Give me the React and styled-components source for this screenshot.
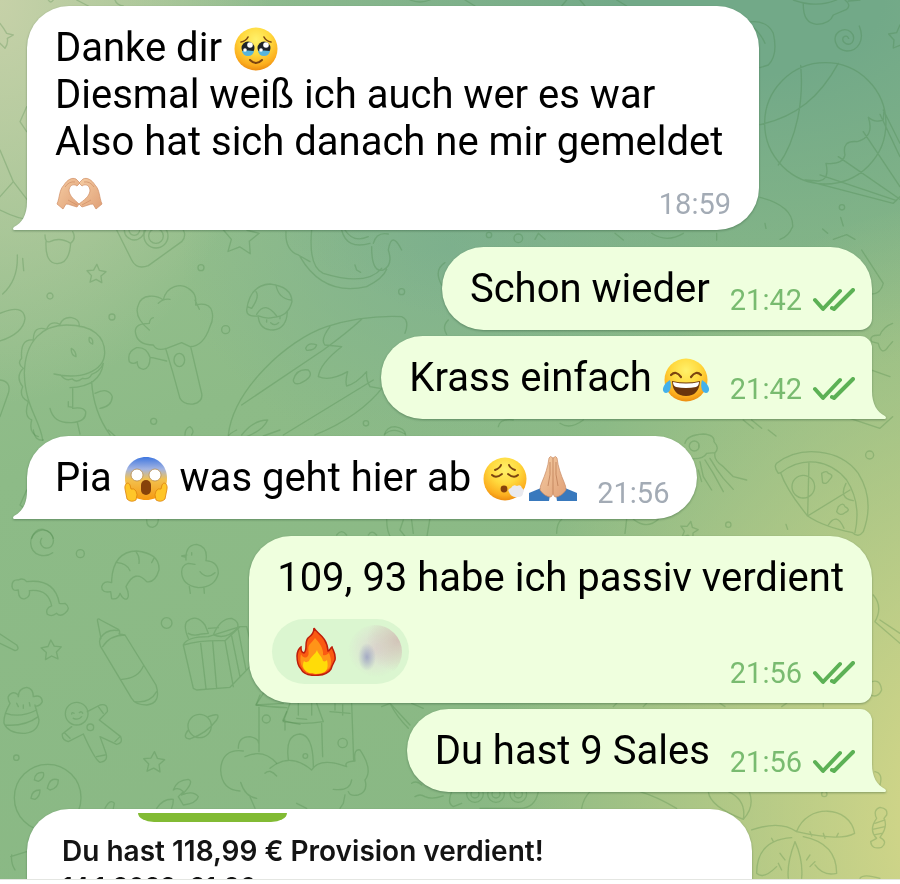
import styled, { createGlobalStyle, css } from "styled-components";

const GlobalStyle = createGlobalStyle`
  * {
    box-sizing: border-box;
  }

  body {
    margin: 0;
    font-family: Roboto, "Liberation Sans", sans-serif;
  }
`;

const messages = [
  {
    side: "in",
    tail: true,
    time: "18:59",
    parts: ["Danke dir ", { emoji: "tears" }, "\nDiesmal weiß ich auch wer es war\nAlso hat sich danach ne mir gemeldet ", { emoji: "heartHands" }],
  },
  { side: "out", group: "first", time: "21:42", parts: ["Schon wieder"] },
  { side: "out", group: "last", tail: true, time: "21:42", parts: ["Krass einfach ", { emoji: "joy" }] },
  {
    side: "in",
    tail: true,
    time: "21:56",
    parts: ["Pia ", { emoji: "scream" }, " was geht hier ab ", { emoji: "exhale" }, { emoji: "pray" }],
  },
  { side: "out", group: "first", time: "21:56", parts: ["109, 93 habe ich passiv verdient"], reaction: true },
  { side: "out", group: "last", tail: true, time: "21:56", parts: ["Du hast 9 Sales"] },
];

export default function App() {
  return (
    <Page>
      <GlobalStyle />
      <Chat>
        <Wallpaper />
        <Messages>
          {messages.map((m, i) => (
            <Message key={i} message={m} />
          ))}
          <PhotoBubble>
            <GreenButton />
            <Headline>Du hast 118,99 € Provision verdient!</Headline>
            <DateLine>14.1.2022, 21:36</DateLine>
          </PhotoBubble>
        </Messages>
      </Chat>
      <InputBar />
    </Page>
  );
}

function Message({ message }) {
  const { side, group, tail, time, parts, reaction } = message;
  const meta = (
    <Meta $side={side} $float={!reaction}>
      <time>{time}</time>
      {side === "out" && <Checks />}
    </Meta>
  );

  return (
    <Bubble $side={side} $group={group}>
      <Text $inset={reaction}>
        {parts.map((p, i) => (p.emoji ? <Emoji key={i} name={p.emoji} /> : p))}
        {!reaction && meta}
      </Text>
      {reaction && (
        <Footer>
          <Reaction type="button" aria-label="Reaktion Feuer">
            <Fire />
            <Avatar />
          </Reaction>
          {meta}
        </Footer>
      )}
      {tail && <Tail side={side} />}
    </Bubble>
  );
}

function Tail({ side }) {
  return (
    <TailSvg $side={side} viewBox="0 0 15 28" aria-hidden="true">
      <path d="M15 0H14C14 13 9 21 1 25Q-1 27 1 28H15Z" />
    </TailSvg>
  );
}

function Checks() {
  return (
    <ChecksSvg viewBox="0 0 43 24" aria-label="Gelesen">
      <path d="M3 12L11 21L28 3M20 20L22 21L41 2" />
    </ChecksSvg>
  );
}

function Fire() {
  return (
    <FireSvg viewBox="0 0 40 49" aria-hidden="true">
      <path
        d="M18 1C20 6 31 9 32 24C34 24 34 21 36 20C37 24 40 26 39 33C37 37 36 38 35 42C30 50 9 51 5 42C2 39 1 34 1 29C1 25 3 21 5 20C5 23 5 25 8 26C12 22 8 16 12 11C15 9 18 6 18 1Z"
        fill="#fa5a12"
        stroke="#bd1d0b"
        strokeWidth="1.5"
      />
      <path
        d="M19 11C23 15 28 22 27 28C30 29 31 27 33 26C35 31 36 36 34 40C30 47 10 48 7 41C4 37 4 32 5 27C7 31 9 31 11 30C15 27 10 21 14 17Q17 14 19 11Z"
        fill="#ff9418"
      />
      <path
        d="M21 23C22 27 26 29 27 34C29 35 30 34 31 33C32 37 32 41 30 44C26 48 12 48 9 43C6 40 7 36 8 34C10 36 11 35 13 34C15 29 19 28 21 23Z"
        fill="#ffdc08"
      />
    </FireSvg>
  );
}

function Emoji({ name }) {
  const { label, art: Art } = emojis[name];
  return (
    <EmojiSvg viewBox="0 0 48 48" role="img" aria-label={label}>
      <defs>
        <radialGradient id="face" cx="50%" cy="28%" r="75%">
          <stop offset="0" stopColor="#fff16b" />
          <stop offset="0.45" stopColor="#ffd93d" />
          <stop offset="0.8" stopColor="#fcae1f" />
          <stop offset="1" stopColor="#e8840c" />
        </radialGradient>
        <linearGradient id="scared" x1="0" y1="0" x2="0" y2="1">
          <stop offset="0" stopColor="#3f77e0" />
          <stop offset="0.28" stopColor="#a3b4e2" />
          <stop offset="0.52" stopColor="#f2c14f" />
          <stop offset="1" stopColor="#f7990f" />
        </linearGradient>
        <linearGradient id="skin" x1="0" y1="0" x2="1" y2="1">
          <stop offset="0" stopColor="#f5cda3" />
          <stop offset="1" stopColor="#e0a077" />
        </linearGradient>
      </defs>
      <Art />
    </EmojiSvg>
  );
}

const Tears = () => (
  <>
    <circle cx="24" cy="24" r="21.5" fill="url(#face)" />
    <path d="M9 17Q14 16 16 12M39 17Q34 16 32 12" fill="none" stroke="#7b4410" strokeWidth="1.6" strokeLinecap="round" />
    {[16, 32].map(x => (
      <g key={x}>
        <circle cx={x} cy="23" r="6.5" fill="#20242a" />
        <path d={`M${x - 6} 26Q${x} 25 ${x + 6} 26Q${x + 5} 31 ${x} 31Q${x - 5} 31 ${x - 6} 26Z`} fill="#58b4dc" />
        <circle cx={x + 2} cy="20" r="2.8" fill="#fff" />
        <circle cx={x - 3} cy="25" r="1.8" fill="#fff" />
      </g>
    ))}
    <path d="M18 35Q24 41 30 35" fill="none" stroke="#7b4410" strokeWidth="2" strokeLinecap="round" />
  </>
);

const HeartHands = () => (
  <g stroke="#d08e65" strokeWidth="0.7" strokeLinejoin="round">
    <path
      d="M2 38C5 31 4 24 9 19C12 14 17 11 21 13L25 17L22 20C18 17 14 20 14 25C15 31 20 34 24 38L22 41C18 40 14 38 11 38L8 43Z"
      fill="url(#skin)"
    />
    <path
      d="M47 38C44 31 45 24 40 19C37 14 32 11 28 13L24 17L27 20C31 17 35 20 35 25C34 31 29 34 24 38L27 41C31 40 35 38 38 38L41 43Z"
      fill="url(#skin)"
    />
    <path d="M10 21Q14 15 20 16M39 21Q35 15 29 16M13 34L22 39M36 34L27 39" fill="none" />
  </g>
);

const Joy = () => (
  <>
    <circle cx="24" cy="25" r="21.5" fill="url(#face)" />
    <path d="M9 20Q14 15 19 22M29 22Q34 15 39 20" fill="none" stroke="#7b4410" strokeWidth="2.2" strokeLinecap="round" />
    <path d="M10 26Q24 29 38 26Q37 41 24 41Q11 41 10 26Z" fill="#6b350d" />
    <path d="M11 27Q24 30 37 27Q37 31 34 32Q24 34 14 32Q11 31 11 27Z" fill="#fff" />
    <path d="M8 25C10 32 8 38 4 38C-1 37 0 30 8 25Z" fill="#43b1ec" />
    <path d="M40 25C38 32 40 38 44 38C49 37 48 30 40 25Z" fill="#43b1ec" />
  </>
);

const Scream = () => (
  <>
    <path d="M24 2C36 2 45 11 45 23C45 36 37 45 24 45C11 45 3 36 3 23C3 11 12 2 24 2Z" fill="url(#scared)" />
    <circle cx="15" cy="20" r="6" fill="#fff" stroke="#b68c4d" strokeWidth="0.8" />
    <circle cx="33" cy="20" r="6" fill="#fff" stroke="#b68c4d" strokeWidth="0.8" />
    <rect x="19" y="25" width="10" height="15" rx="5" fill="#87420a" />
    <path d="M3 34C2 29 6 26 8 30L9 34Q12 33 14 36Q16 39 14 45Q9 48 5 44Z" fill="#ffc629" stroke="#dc820d" strokeWidth="0.8" />
    <path d="M45 34C46 29 42 26 40 30L39 34Q36 33 34 36Q32 39 34 45Q39 48 43 44Z" fill="#ffc629" stroke="#dc820d" strokeWidth="0.8" />
  </>
);

const Exhale = () => (
  <>
    <circle cx="24" cy="24" r="21.5" fill="url(#face)" />
    <path
      d="M14 15Q19 13 20 10M28 10Q29 13 34 15M11 20Q15 24 21 19M27 19Q33 24 37 20"
      fill="none"
      stroke="#7b4410"
      strokeWidth="1.9"
      strokeLinecap="round"
    />
    <circle cx="23" cy="34" r="3.4" fill="#87420a" />
    <path d="M28 37Q26 34 30 33Q32 29 36 31Q40 29 41 33Q44 35 42 38Q42 42 37 42Q30 43 28 37Z" fill="#e9e9ee" />
  </>
);

const Pray = () => (
  <>
    <path d="M0 38L12 33L21 40L20 46H0Z" fill="#3979bd" />
    <path d="M48 38L36 33L27 40L28 46H48Z" fill="#3979bd" />
    <path
      d="M24 3Q21 0 20 3C19 12 16 20 13 27Q11 31 11 35Q16 42 22 42L24 39L26 42Q32 42 37 35Q37 31 35 27C32 20 29 12 28 3Q27 0 24 3Z"
      fill="url(#skin)"
      stroke="#c98b65"
      strokeWidth="0.7"
    />
    <path d="M24 3V39M21 7Q22 20 19 31M27 7Q26 20 29 31" fill="none" stroke="#b97852" strokeWidth="0.7" />
  </>
);

const emojis = {
  tears: { label: "🥹", art: Tears },
  heartHands: { label: "🫶🏼", art: HeartHands },
  joy: { label: "😂", art: Joy },
  scream: { label: "😱", art: Scream },
  exhale: { label: "😮‍💨", art: Exhale },
  pray: { label: "🙏🏼", art: Pray },
};

const star = (cx, cy, r, turn = 0) => {
  const points = Array.from({ length: 10 }, (_, i) => {
    const radius = i % 2 ? r * 0.5 : r;
    const angle = (i * Math.PI) / 5 - Math.PI / 2 + turn;
    return `${(cx + radius * Math.cos(angle)).toFixed(1)} ${(cy + radius * Math.sin(angle)).toFixed(1)}`;
  });
  return `M${points.join("L")}Z`;
};

const dot = (cx, cy, r) => `M${cx - r} ${cy}a${r} ${r} 0 1 0 ${r * 2} 0a${r} ${r} 0 1 0 ${-r * 2} 0`;

// Doodles are drawn at three times their size, one sheet per area of the wallpaper
const doodles = [
  {
    x: 0,
    y: 0,
    paths: [
      "M0 70Q12 85 20 100L40 105L22 115Q25 130 15 145L0 130",
      "M80 320L60 365L80 395M0 450L40 545L90 610M0 590L40 545M0 630Q60 660 100 660",
      "M145 0Q152 12 160 0M230 0L265 18M345 0Q350 15 370 18",
      "M1230 0Q1260 12 1290 0",
    ],
  },
  {
    x: 450,
    y: 0,
    paths: [
      "M45 0L75 18M350 0L335 18M390 0L405 18M500 0L530 18",
      "M1030 0Q1100 25 1160 0M1060 10Q1058 70 1100 73Q1140 72 1150 45L1190 28Q1205 15 1185 0M1195 3L1230 0",
      "M885 68Q950 55 970 100Q985 165 955 195L930 203M900 75Q930 95 945 130",
      "M1228 78C1245 120 1225 153 1190 153C1155 150 1145 110 1168 94C1195 78 1220 105 1207 127C1195 140 1173 128 1180 112Q1190 103 1196 115",
      "M1350 75L1340 98L1316 102L1332 120L1330 144L1350 136",
      dot(1126, 370, 182),
      "M1052 196C1062 300 1040 420 985 495M1165 190C1110 290 1040 350 930 374",
      "M1302 330L1300 360Q1275 370 1255 352Q1275 410 1222 425Q1175 420 1185 465Q1180 495 1128 490Q1140 540 1105 543L1065 540",
      "M1290 343L1350 470M1300 330L1350 430M1240 395L1350 560M1165 470L1350 598M1110 525L1340 602M1080 545L1330 610L1350 590",
      dot(1176, 622, 8),
      "M1172 652L1180 678M1118 687L1133 700M945 670L948 685M930 592C1000 610 1030 640 1028 680Q1015 710 990 718M1150 718L1190 704L1215 718",
      dot(117, 705, 8),
      dot(205, 715, 13),
      "M255 718L265 700L285 718M495 700L520 720M605 700Q650 730 700 700M800 700V720",
    ],
  },
  {
    x: 0,
    y: 230,
    paths: [
      "M135 15Q135 40 150 35Q180 20 212 40Q230 25 218 5M138 35Q135 100 172 101Q208 100 212 40",
      "M350 0L395 90Q410 120 445 107L545 35Q560 20 550 0",
      dot(403, 0, 30),
      dot(403, 0, 16),
      dot(468, 18, 36),
      dot(468, 18, 22),
      star(289, 133, 30, 0.05),
      star(722, 22, 57, 0.1),
      dot(603, 113, 9),
      dot(150, 198, 9),
      dot(336, 261, 9),
      dot(677, 299, 12),
      dot(1205, 185, 9),
      dot(461, 574, 9),
      dot(1098, 580, 8),
      "M52 75Q55 150 8 192M68 85L71 122M0 250Q70 220 75 265Q70 310 0 333M0 450Q35 455 25 490L0 560",
      "M128 630C120 570 75 530 73 430C75 330 130 285 200 285C280 285 315 320 314 370C312 425 240 450 162 432M182 435Q195 455 217 447Q230 460 248 445Q268 450 275 433Q300 425 310 400Q300 470 210 473",
      "M100 330Q100 285 140 298Q150 270 180 283Q190 260 215 263Q240 268 238 290M100 330Q60 325 65 385Q50 400 70 415Q45 440 68 470Q55 500 85 515Q70 560 95 570Q85 610 115 620",
      "M275 455Q280 545 330 615M218 475V532L205 530V515M150 535Q160 580 215 578Q260 575 257 545Q250 530 218 535M232 577L240 612M285 490Q325 470 337 500Q335 530 300 535",
      "M268 322Q280 325 278 342Q264 338 268 322M214 355Q228 362 228 380Q212 375 214 355",
      "M448 300Q400 260 415 225C425 190 470 195 490 210C500 165 545 160 565 175C590 190 588 210 587 225C650 210 640 270 630 290Q610 350 570 350L545 338L500 355Q470 365 460 345Q410 345 406 305Q405 280 448 280Q450 265 460 263M475 220Q490 205 510 208M598 238L585 210",
      "M497 355Q520 430 540 505Q550 525 580 522Q610 515 605 490L572 350M500 393Q470 385 450 382Q440 350 410 353Q380 365 388 395Q400 405 412 395Q410 415 430 418Q450 415 450 385",
      "M522 390A16 20 0 1 0 554 390A16 20 0 1 0 522 390",
      "M740 240Q750 165 810 162Q875 170 876 215Q865 260 820 262Q800 268 775 258Q740 262 740 240M768 185Q780 200 755 235L742 230M828 165Q835 205 873 210M770 253Q795 210 830 258M775 262Q780 300 820 300Q860 295 862 245M800 270V276M840 260V266M812 278Q825 290 836 278",
      "M685 615C700 480 860 330 980 290Q1090 255 1205 260Q1230 270 1215 310M725 525L970 360Q1040 310 1085 268M850 615L1120 450M945 615Q1080 560 1150 470",
      "M990 290Q960 330 975 345L1025 350Q960 400 955 440Q990 455 1043 425Q1035 455 1040 468Q1070 460 1100 425Q1098 450 1110 470L1140 475",
      "M917 355Q925 335 950 345Q945 362 920 361ZM880 450Q890 415 925 420Q945 440 900 460Q880 465 880 450ZM725 615Q760 570 803 570Q790 600 740 620",
      "M858 5Q855 60 895 75L930 95M935 0Q925 110 970 130Q1100 170 1145 115M900 80Q970 200 1100 170Q1150 145 1160 118M1025 0Q1040 60 1110 40M1035 0Q1060 40 1105 20M1115 50Q1115 130 1150 120Q1180 105 1165 60Q1175 0 1205 60M1120 40Q1130 5 1165 12M1065 105L1070 120L1082 127",
      "M555 615Q555 595 570 590Q585 600 575 615M1153 615Q1160 590 1185 590Q1215 595 1217 615M1335 98Q1300 120 1325 165M1345 270Q1325 290 1340 313",
    ],
  },
  {
    x: 370,
    y: 240,
    paths: [
      "M1475 30L1540 130Q1530 170 1490 160M1568 250Q1540 260 1530 285Q1495 285 1505 305L1525 310Q1535 350 1555 320L1568 305",
      "M1490 385L1560 410M1500 440Q1495 420 1505 395M1440 535L1530 565L1568 530",
      "M385 560Q390 535 430 540M570 550Q600 570 640 540M1120 540L1150 565M1145 540L1175 565",
    ],
  },
  {
    x: 440,
    y: 430,
    paths: [
      "M735 40Q740 15 790 12Q825 15 822 35Q840 55 825 68L800 70Q790 90 745 85L735 60M748 48A15 15 0 1 0 778 48A15 15 0 1 0 748 48M776 45V53",
      "M825 70Q820 90 850 110L880 140L920 150M810 85Q830 120 850 145L880 178M795 90L820 130L850 185M780 95L790 140L815 180M775 120L785 155",
      "M1015 130Q1000 110 1010 100C1080 45 1200 55 1255 130Q1305 210 1270 305Q1255 325 1238 308Q1150 290 1103 258Q1040 180 1022 128ZM1022 128C1090 75 1170 90 1220 150Q1265 220 1245 308M1107 98L1103 258L1230 180",
      dot(1090, 170, 34),
      "M1218 160Q1195 205 1240 212M1165 285Q1190 245 1212 295M1145 130Q1160 120 1165 130Q1185 135 1168 150Q1160 165 1148 158ZM1195 230Q1210 215 1215 230Q1235 240 1215 248Q1200 260 1190 245Z",
      dot(1289, 75, 12),
      dot(865, 284, 8),
      star(747, 302, 28, 0.2),
      "M1038 283L1043 298M985 0L1008 18M350 310Q350 280 365 268M560 268L555 310M580 268Q620 300 655 268",
    ],
  },
  {
    x: 0,
    y: 430,
    paths: [
      "M80 180L60 225L80 240M100 0Q105 35 130 30M440 270Q440 292 458 292Q475 288 475 268M95 325Q105 295 130 298Q155 305 160 325M1160 265Q1160 310 1175 325M1290 265L1280 325M1210 270L1200 300L1220 325M1235 270L1240 310M1010 315Q1025 295 1040 315M1105 315Q1115 298 1130 315",
      "M325 0L345 18M710 0Q690 10 685 18M840 0L790 18M1155 12Q1180 -10 1215 12",
    ],
  },
  {
    x: 0,
    y: 530,
    paths: [
      "M158 68C135 85 95 78 92 40C92 5 130 -10 152 10C170 35 155 60 132 53Q115 40 125 25",
      dot(241, 71, 12),
      dot(500, 279, 16),
      star(154, 362, 32, -0.05),
      star(462, 698, 33, 0.05),
      dot(49, 683, 8),
      "M55 150Q35 148 36 170Q38 185 55 180Q55 210 75 206Q92 200 88 182Q145 175 155 228Q135 235 142 253Q155 262 170 250Q180 262 195 250Q215 235 195 220Q185 222 178 220Q165 145 80 155Q70 142 55 150Z",
      "M335 150Q340 65 410 63Q480 70 477 120Q465 160 440 155Q405 115 378 170Q390 195 382 206Q370 212 360 190Q355 210 335 206L332 185Q305 190 305 170Q310 150 335 158ZM352 98Q380 100 390 122M408 65Q420 80 417 100M463 83L455 98",
      "M560 75L545 78L558 82M558 90Q555 45 590 43Q625 50 618 92Q655 95 655 130Q645 172 595 173Q545 165 545 125Q545 105 565 100L585 103M600 125Q620 150 645 128M568 170L571 190M612 173L613 190M575 68V75",
      "M293 275Q290 262 302 270L355 298Q362 305 357 312L375 315L468 465Q485 520 440 525Q405 525 395 505L302 350Q295 330 303 325ZM300 325Q320 295 357 302M308 350Q330 315 375 315M365 448Q415 445 430 408M405 515Q450 520 470 485",
      "M550 345L580 475L590 480L690 472L750 410M550 345Q560 320 625 320L720 290L740 290L750 330M550 345Q600 330 675 332L720 290M602 340L618 475M638 335L650 475M675 332L700 470M695 318L720 440M715 300L738 420M565 325Q550 290 560 275Q590 250 615 285L625 310L605 312Q580 320 565 310M640 315Q660 265 695 265Q720 275 712 295Q680 330 640 315M625 295L655 293",
      "M30 520Q15 495 40 488Q55 490 55 500Q55 475 80 472Q100 475 100 500Q125 492 127 515Q120 530 105 528M30 520Q10 555 12 580Q25 612 75 610Q115 605 117 570L105 525M18 550Q60 565 110 540M15 585Q75 590 115 560M50 520L55 530M70 525V535M88 518L90 528",
      dot(230, 551, 34),
      "M262 545L300 525Q325 520 322 545L298 570L362 620Q370 640 350 643L300 620L318 670Q325 695 300 697Q285 690 250 612L205 635Q185 630 187 612L215 590M215 552Q215 545 222 550M238 548Q245 542 248 550M220 565Q235 572 245 560M295 530L310 550M345 635L360 620M290 680L315 675M195 610L210 625",
      dot(271, 592, 10),
      dot(599, 588, 35),
      "M625 560Q665 545 650 570Q620 610 570 627Q545 625 565 600M520 780Q530 750 565 748Q585 755 545 795Q580 780 595 800Q590 820 550 825L535 800L550 785Q535 770 520 780M470 835Q490 805 520 808Q520 825 515 835M315 835Q330 805 343 820L340 835M0 312L50 345Q60 360 45 362L0 340",
      dot(143, 803, 100),
      "M103 750Q105 725 130 728Q135 745 115 754ZM142 775Q150 740 175 750Q175 775 150 780ZM93 805Q95 780 120 780Q120 800 105 808Z",
      "M790 490L768 525Q800 530 860 533M777 532V665M860 545L848 572L900 583M855 570V600",
      dot(799, 567, 12),
      "M715 655Q715 620 750 620Q775 625 776 640M730 663Q665 655 662 720Q665 780 720 783M735 680Q790 655 830 700M722 757Q735 800 770 805M750 800L765 835M35 975Q32 1000 45 1020M32 980L80 965",
    ],
  },
  {
    x: 240,
    y: 600,
    paths: [
      "M60 285L48 315L130 310M130 365L150 310M130 365Q190 375 250 365L230 310M245 370L248 470M335 310L341 480M145 478Q135 405 180 402Q220 405 220 500M175 310V345M215 310V345M170 355L200 358M270 335L330 340M308 315V345M285 312V330",
      dot(308, 429, 14),
      dot(196, 468, 7),
      "M75 520Q90 505 110 528M90 505Q150 455 215 510Q240 470 320 500Q310 485 345 483Q340 445 360 450Q400 510 375 540Q385 575 355 585Q330 590 325 575M280 568Q330 575 335 540M170 610L200 625M315 585L310 610L300 625",
      "M425 320L450 310L510 375M450 310Q470 350 505 385M515 310L550 325M515 550Q530 540 545 555M525 590Q540 580 555 590Q575 600 610 588M635 575Q620 610 640 620L665 610",
      dot(705, 582, 25),
      dot(705, 582, 12),
    ],
  },
  {
    x: 480,
    y: 540,
    paths: [
      dot(48, 762, 25),
      dot(115, 762, 25),
      dot(48, 762, 12),
      dot(115, 762, 12),
      "M0 805H120Q165 805 175 755M305 805Q310 775 330 755M480 755Q530 770 590 805M685 755Q690 800 790 838Q825 800 808 755M745 755Q800 780 790 838",
      "M1180 165Q1210 200 1185 245L1260 310M1200 240L1260 280M1165 430Q1200 410 1205 450Q1195 475 1170 465M1185 695Q1210 700 1200 735",
      dot(1033, 762, 8),
      "M950 875C980 790 1110 795 1124 880Q1080 905 950 875ZM950 875Q900 840 815 870M970 890Q1070 910 1070 1000Q1030 1010 1005 975M935 893Q830 900 830 1000Q850 1020 890 980M945 905Q920 970 925 1015M945 905Q970 960 965 1015M1070 890L1075 880M1035 895L1030 880M995 888L990 875M905 990L895 970M915 960L900 940M980 960L990 945M990 980L1005 965M880 905L875 895",
      "M1190 835Q1178 810 1200 802Q1225 805 1220 825L1212 835Q1225 860 1200 892Q1225 905 1205 922Q1175 930 1172 905L1190 895Q1165 870 1190 835ZM1185 850L1215 840M1178 868L1215 860M1182 885L1205 880",
      "M1140 1015Q1150 1000 1200 1015M400 500L410 490M490 500L500 490M720 490L735 500M905 500L920 490M1030 490V500",
    ],
  },
];

function Wallpaper() {
  return (
    <WallpaperSvg viewBox="0 0 900 879" preserveAspectRatio="xMidYMin slice" aria-hidden="true">
      {doodles.map((sheet, i) => (
        <g key={i} transform={`translate(${sheet.x} ${sheet.y}) scale(0.3333)`}>
          <path d={sheet.paths.join("")} />
        </g>
      ))}
    </WallpaperSvg>
  );
}

const Page = styled.div`
  height: 100vh;
  display: flex;
  flex-direction: column;
`;

const Chat = styled.main`
  position: relative;
  flex: 1;
  min-height: 0;
  overflow: hidden;
  background:
    radial-gradient(ellipse 30% 46% at 0% 0%, #c6d1a8, rgba(198, 209, 168, 0)),
    radial-gradient(ellipse 58% 72% at 112% 94%, #d0d588 18%, rgba(208, 213, 136, 0)),
    radial-gradient(ellipse 70% 42% at 84% 0%, #72a988 20%, rgba(114, 169, 136, 0)),
    radial-gradient(ellipse 30% 25% at 50% 28%, #80b28e, rgba(128, 178, 142, 0)),
    linear-gradient(160deg, #9bc292, #8dbb87 40%, #88b783);
`;

const WallpaperSvg = styled.svg`
  position: absolute;
  inset: 0;
  width: 100%;
  height: 100%;

  path {
    fill: none;
    stroke: #3c7a3a;
    stroke-opacity: 0.25;
    stroke-width: 4;
    stroke-linecap: round;
    stroke-linejoin: round;
  }
`;

const Messages = styled.section`
  position: relative;
  display: flex;
  flex-direction: column;
  padding: 6px 28px 0 27px;
`;

const groupShapes = {
  first: css`
    border-radius: 42px 42px 12px 42px;
    margin-bottom: 6px;
  `,
  last: css`
    border-radius: 42px 12px 0 42px;
  `,
};

const Bubble = styled.article`
  position: relative;
  align-self: ${p => (p.$side === "out" ? "flex-end" : "flex-start")};
  max-width: 732px;
  margin-bottom: 17px;
  padding: 18px ${p => (p.$side === "out" ? 17 : 28)}px 18px 28px;
  border-radius: 42px 42px 42px 0;
  background: ${p => (p.$side === "out" ? "#efffde" : "#fff")};
  color: #000;
  filter: drop-shadow(0 1px 1px rgba(30, 70, 40, 0.4));
  ${p => groupShapes[p.$group]}
`;

const Text = styled.div`
  padding-right: ${p => (p.$inset ? 11 : 0)}px;
  font-size: 40px;
  line-height: 47px;
  white-space: pre-wrap;
`;

const Meta = styled.span`
  float: ${p => (p.$float ? "right" : "none")};
  display: flex;
  align-items: center;
  gap: 10px;
  margin: ${p => (p.$float ? (p.$side === "out" ? "18px 0 -5px 20px" : "22px 0 -9px 20px") : "0 0 13px")};
  font-size: 29px;
  line-height: 34px;
  color: ${p => (p.$side === "out" ? "#79bb70" : "#a3abb5")};
`;

const ChecksSvg = styled.svg`
  width: 43px;
  height: 24px;
  fill: none;
  stroke: #5cb155;
  stroke-width: 4;
  stroke-linecap: round;
  stroke-linejoin: round;
`;

const TailSvg = styled.svg`
  position: absolute;
  bottom: 0;
  width: 15px;
  height: 28px;
  fill: ${p => (p.$side === "out" ? "#efffde" : "#fff")};
  ${p => (p.$side === "out" ? "right: -14px; transform: scaleX(-1);" : "left: -14px;")}
`;

const EmojiSvg = styled.svg`
  width: 48px;
  height: 48px;
  margin: -4px 0;
  vertical-align: -8px;
`;

const Footer = styled.div`
  display: flex;
  align-items: flex-end;
  justify-content: space-between;
  margin: 18px 0 -18px -5px;
`;

const Reaction = styled.button`
  display: flex;
  align-items: center;
  gap: 12px;
  height: 65px;
  margin: 0 0 19px;
  padding: 0 7px 0 24px;
  border: none;
  border-radius: 33px;
  background: #dbf6d0;
  cursor: pointer;
`;

const FireSvg = styled.svg`
  width: 40px;
  height: 49px;
`;

const Avatar = styled.span`
  width: 54px;
  height: 54px;
  border-radius: 50%;
  background:
    radial-gradient(ellipse 9px 14px at 19px 32px, rgba(140, 145, 190, 0.7), rgba(150, 160, 190, 0)),
    radial-gradient(circle at 50px 15px, #d2c3b8, rgba(216, 208, 198, 0) 50%),
    radial-gradient(circle at 28px 24px, #dcd8d2, rgba(219, 246, 208, 0) 68%);
`;

const PhotoBubble = styled.article`
  width: 725px;
  max-width: 100%;
  height: 120px;
  padding: 4px 35px 0;
  border-radius: 42px 42px 0 0;
  background: #fff;
  color: #141414;
  font-family: Inter, "Liberation Sans", sans-serif;
  filter: drop-shadow(0 1px 1px rgba(30, 70, 40, 0.4));
`;

const GreenButton = styled.div`
  width: 149px;
  height: 9px;
  margin-left: 76px;
  border-radius: 0 0 16px 16px / 0 0 9px 9px;
  background: #82bb34;
`;

const Headline = styled.h2`
  margin: 12px 0 0;
  font-size: 28px;
  font-weight: 600;
  line-height: 34px;
`;

const DateLine = styled.p`
  margin: 2px 0 0;
  font-size: 25px;
  font-weight: 600;
  line-height: 34px;
`;

const InputBar = styled.footer`
  height: 5px;
  border-top: 1px solid #e4e6e2;
  background: #fff;
`;
